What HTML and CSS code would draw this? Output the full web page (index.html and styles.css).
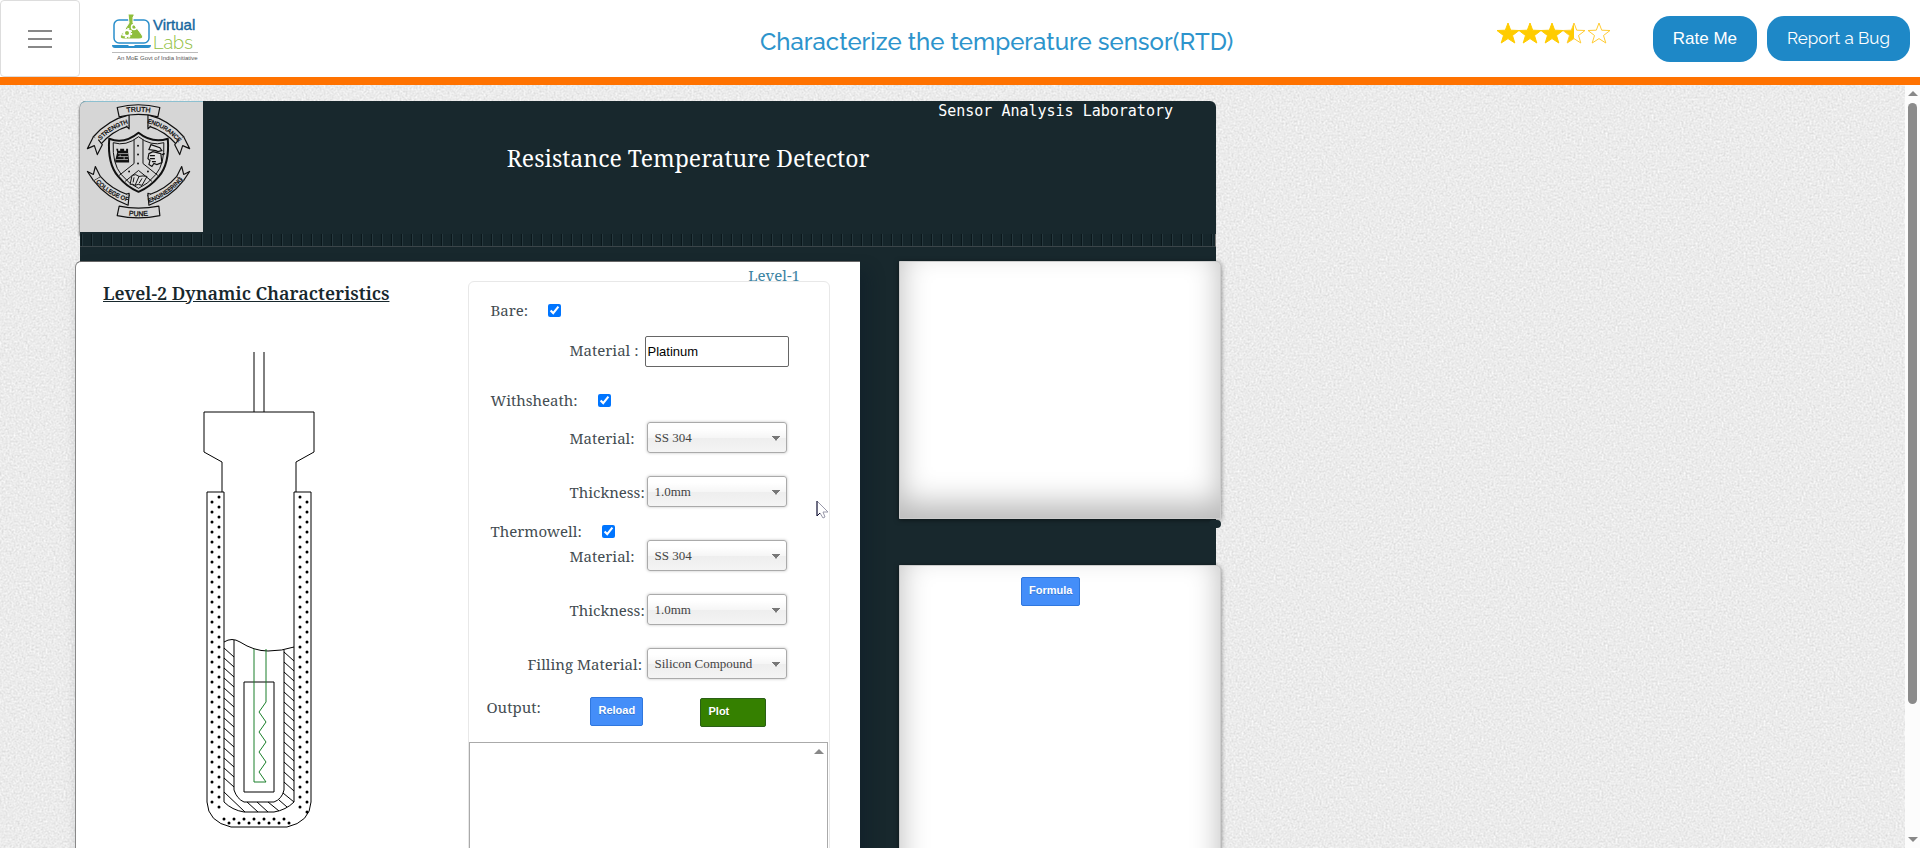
FILE: index.html
```html
<!DOCTYPE html>
<html lang="en">
<head>
<meta charset="utf-8">
<title>Characterize the temperature sensor(RTD)</title>
<link rel="stylesheet" href="styles.css">
</head>
<body>
<header class="topbar">
  <button class="menu" type="button" aria-label="Menu"><span></span><span></span><span></span></button>
  <a class="brand" href="#" aria-label="Virtual Labs">
    <svg width="88" height="50" viewBox="0 0 88 50">
      <rect x="2" y="6" width="35" height="23" rx="5" fill="none" stroke="#2a8fcb" stroke-width="1.500"/>
      <path d="M16 0h6v2l-1 1v6l9 12q2 4-3 4H12q-5 0-3-4l8-12z" fill="#8fbe3c" stroke="#fff" stroke-width="1"/>
      <circle cx="15" cy="19" r="3" fill="none" stroke="#fff" stroke-width="2"/>
      <circle cx="15" cy="19" r="4.500" fill="none" stroke="#fff" stroke-width="1.500" stroke-dasharray="2 1.500"/>
      <circle cx="22" cy="13" r="2.500" fill="none" stroke="#fff" stroke-width="1.500"/>
      <path d="M0 31h16l1 1h5l1-1h16q0 3-3 3H3q-3 0-3-3z" fill="#2a8fcb"/>
      <text class="brand-virtual" x="41" y="16">Virtual</text>
      <text class="brand-labs" x="41" y="35">Labs</text>
      <path d="M0 38.500h86" stroke="#bbb"/>
      <text class="brand-note" x="5" y="46">An MoE Govt of India Initiative</text>
    </svg>
  </a>
  <h1 class="page-title">Characterize the temperature sensor(RTD)</h1>
  <div class="actions">
    <svg class="stars" width="116" height="24" viewBox="0 0 116 24" role="img" aria-label="3.5 stars">
      <defs><path id="star" d="M11 1l2.700 7.200 8.300.300-6.500 5 2.300 7.500-6.800-4.400L4.200 21l2.300-7.500L0 8.500l8.300-.300z"/></defs>
      <g fill="#fc0" stroke="#fc0">
        <use href="#star"/><use href="#star" x="22"/><use href="#star" x="44"/>
        <path stroke="none" d="M77 1v15.600L70.200 21l2.300-7.500-6.500-5 8.300-.300z"/>
      </g>
      <g fill="none" stroke="#fc3" stroke-width="1"><use href="#star" x="66"/><use href="#star" x="91"/></g>
    </svg>
    <button class="pill" type="button">Rate Me</button>
    <a class="pill pill-report" href="#">Report a Bug</a>
  </div>
</header>

<main class="viewport">
  <svg class="grain" aria-hidden="true"><filter id="noise" color-interpolation-filters="sRGB"><feTurbulence type="fractalNoise" baseFrequency="0.5" numOctaves="3" seed="4"/><feColorMatrix values="0.120 0.120 0 0 0.802  0.120 0.120 0 0 0.802  0.120 0.120 0 0 0.802  0 0 0 0 1"/></filter><rect width="100%" height="100%" filter="url(#noise)"/></svg>
  <div class="scene">
    <section class="lab">
      <header class="banner">
        <svg class="crest" viewBox="0 0 123 131" role="img" aria-label="College of Engineering Pune">
          <defs>
            <g id="ribbons">
              <path d="M49 13Q28 18 13 35L20 43Q32 29 49 24z"/>
              <path d="M13 35L7 47l7-3 3 9 5-10-4-5M46 24l3 3v-3"/>
              <path d="M13 79Q26 96 48 104L49 94Q31 88 20 75z"/>
              <path d="M20 75l-5-10-2 8-6-3 6 9M46 93l3-1v3"/>
            </g>
            <path id="arc-strength" d="M19 40Q31 26 50 21"/>
            <path id="arc-endurance" d="M67 21Q87 26 99 41"/>
            <path id="arc-college" d="M14 79Q28 95 50 101"/>
            <path id="arc-engineering" d="M68 102Q89 95 104 77"/>
            <path id="arc-truth" d="M40 12Q58 7.500 77 12"/>
            <path id="arc-pune" d="M40 113Q58 117 77 113"/>
          </defs>
          <g fill="#d6d6d6" stroke="#111" stroke-width="1.200" stroke-linejoin="round">
            <use href="#ribbons"/>
            <use href="#ribbons" transform="matrix(-1 0 0 1 117 0)"/>
            <path d="M37 5.500Q58 0 80 5.500L78 15Q58 10 39 15z"/>
            <path d="M39 105Q58 109 79 105l1 9.500Q58 119 37 114.500z"/>
            <path stroke-width="2" d="M58.500 31Q44 43 29 37q-2 25 9 38 9 11 20.500 15.500Q70 86 79 75q11-13 9-38-16 5-29.500-6z"/>
            <path fill="none" stroke-width="1" d="M58.500 35Q46 45 33 41q-1 21 8 32 8 10 17.500 14Q68 83 76 73q9-11 8-32-13 4-25.500-6zM54 38v24L39 74M63 38v24l15 12M58.500 69L45 80M58.500 69L72 80"/>
          </g>
          <g fill="#111">
            <circle cx="58" cy="44" r="1"/><circle cx="58" cy="53" r="1"/><circle cx="58" cy="62" r="1"/><circle cx="49" cy="70" r="1"/><circle cx="68" cy="70" r="1"/>
            <path d="M36 47h2v2h2v-2h4v2h2v-2h2v4l1 8v2H35v-2l2-8z"/>
          </g>
          <path d="M38 52h10M38 55h10M36 58h12M40 53v2m4 0v3" stroke="#bbb" stroke-width=".8"/>
          <path d="M71 43l9 3 2 3-4 1-2-1-7-1zM69 52l4-2 8 2 1 9-5 2-3-1-2 3-3-2 1-4-2-2zM70 54h5m-5 3h5m-3 3h4M82 53l3-1" fill="#ddd" stroke="#111" stroke-width="1.200"/>
          <path d="M52 74q4-2 7 1 4-1 8 0l-5 9q-4-2-7 0-3-2-5-1zM59 75l-4 9M54 76l-1 5m9-4l-3 5" fill="#ddd" stroke="#111"/>
          <g class="motto">
            <text class="motto-big"><textPath href="#arc-truth" startOffset="50%">TRUTH</textPath></text>
            <text><textPath href="#arc-strength" startOffset="50%">STRENGTH</textPath></text>
            <text><textPath href="#arc-endurance" startOffset="50%">ENDURANCE</textPath></text>
            <text><textPath href="#arc-college" startOffset="50%">COLLEGE OF</textPath></text>
            <text><textPath href="#arc-engineering" startOffset="50%">ENGINEERING</textPath></text>
            <text class="motto-big"><textPath href="#arc-pune" startOffset="50%">PUNE</textPath></text>
          </g>
        </svg>
        <div class="banner-text">
          <p class="lab-name">Sensor Analysis Laboratory</p>
          <h2 class="lab-title">Resistance Temperature Detector</h2>
        </div>
      </header>
      <div class="ribs"></div>

      <div class="columns">
        <section class="work">
          <div class="figure">
            <h3 class="level">Level-2 Dynamic Characteristics</h3>
            <svg class="probe" width="120" height="480" viewBox="200 350 120 480" role="img" aria-label="RTD in thermowell">
              <g fill="none" stroke="#000">
                <path d="M254 352v60M264 352v60M222 492v-30l-18-10v-40h110v40l-18 10v30"/>
                <path d="M224 802V492h-17v310q1 20 24 25h56q23-5 24-25V492h-17v310"/>
                <path d="M224 642q8-5 16 0 14 9 28 9t26-4M234 640v150q3 9 10 12h30q8-3 10-12V650M224 802q8 8 20 10h30q12-2 20-10"/>
                <path d="M224 648l10 9m-10 1l10 9m-10 1l10 9m-10 1l10 9m-10 1l10 9m-10 1l10 9m-10 1l10 9m-10 1l10 9m-10 1l10 9m-10 1l10 9m-10 1l10 9m-10 1l10 9m-10 1l10 9m-10 1l10 9M224 792l21 20M247 802l11 10M257 802l11 10M268 802l11 9M279 800l8 7M283 793l11 9"/>
                <path d="M284 652l10 9m-10 1l10 9m-10 1l10 9m-10 1l10 9m-10 1l10 9m-10 1l10 9m-10 1l10 9m-10 1l10 9m-10 1l10 9m-10 1l10 9m-10 1l10 9m-10 1l10 9m-10 1l10 9m-10 1l10 9"/>
                <path d="M244 682h30v110h-30z"/>
                <path stroke="#1a7f2a" d="M254 649v133h12l-7-10 7-10-7-10 7-10-7-10 7-10-7-10 7-10v-53"/>
              </g>
              <path d="M219 497v311M212 502v301M300 497v311M307 502v311M224 819h61M229 823h61M222 813v0M216 818v0M292 813v0M298 820v0" fill="none" stroke="#000" stroke-width="3" stroke-linecap="round" stroke-dasharray="0 10"/>
            </svg>
          </div>
          <div class="controls">
            <a class="level-link" href="#">Level-1</a>
            <form class="form">
              <div class="check first"><label for="bare">Bare:</label><input id="bare" type="checkbox" checked></div>
              <div class="row material"><label for="bm">Material :</label><input id="bm" class="text" type="text" value="Platinum"></div>
              <div class="check second"><label for="ws">Withsheath:</label><input id="ws" type="checkbox" checked></div>
              <div class="rows">
                <div class="row"><label for="sm">Material:</label><select id="sm"><option>SS 304</option></select></div>
                <div class="row"><label for="st">Thickness:</label><select id="st"><option>1.0mm</option></select></div>
              </div>
              <div class="check third"><label for="tw">Thermowell:</label><input id="tw" type="checkbox" checked></div>
              <div class="rows">
                <div class="row"><label for="tm">Material:</label><select id="tm"><option>SS 304</option></select></div>
                <div class="row"><label for="tt">Thickness:</label><select id="tt"><option>1.0mm</option></select></div>
                <div class="row wide"><label for="fm">Filling Material:</label><select id="fm"><option>Silicon Compound</option></select></div>
              </div>
              <div class="output-row">
                <label for="out">Output:</label>
                <button class="btn" type="button">Reload</button>
                <button class="btn btn-plot" type="button">Plot</button>
              </div>
              <div class="output"><textarea id="out"></textarea><span class="arrow-up"></span></div>
            </form>
          </div>
        </section>
        <div class="side">
          <section class="card graph"></section>
          <div class="nub"></div>
          <section class="card formula"><button class="btn" type="button">Formula</button></section>
        </div>
      </div>
    </section>
    <svg class="cursor" width="13" height="19" viewBox="0 0 13 19" aria-hidden="true"><path d="M1 1v15l3-3 3 5 2-1-2-5h5z" fill="#fff" stroke="#99a"/><path d="M1 1v15l3-3" fill="none" stroke="#113"/></svg>
  </div>
  <div class="scrollbar" aria-hidden="true"><span class="arrow-up"></span><span class="thumb"></span><span class="arrow-down"></span></div>
</main>
</body>
</html>
```

FILE: styles.css
```css
* { box-sizing: border-box; }

body {
  margin: 0;
  height: 100vh;
  display: flex;
  flex-direction: column;
  overflow: hidden;
  font-family: "Noto Serif", "Droid Serif", "DejaVu Serif", serif;
  font-size: 15px;
  color: #444d52;
  background: #fff;
}

h1, h2, h3, p { margin: 0; }

.topbar {
  flex: none;
  height: 85px;
  display: grid;
  grid-template-columns: 80px 118px 32fr auto 15fr auto;
  border-bottom: 8px solid #ff7200;
}

.menu {
  display: flex;
  flex-direction: column;
  align-items: center;
  justify-content: center;
  gap: 6px;
  border: 1px solid #ddd;
  border-radius: 4px;
  background: #fff;
}
.menu span { width: 24px; height: 2px; background: #888; }

.brand { padding: 14px 0 0 32px; }
.brand svg { display: block; overflow: visible; }
.brand text { font-family: "Liberation Sans", sans-serif; }
.brand-virtual { font-size: 15px; fill: #17679f; stroke: #17679f; stroke-width: .4px; }
.brand .brand-labs { font-family: Raleway, Lato, sans-serif; font-weight: 300; font-size: 18px; fill: #8fbe3c; }
.brand-note { font-size: 6px; fill: #555; }

.page-title {
  grid-column: 4;
  padding-top: 26px;
  font-family: Raleway, Lato, sans-serif;
  font-size: 24px;
  line-height: 32px;
  font-weight: 500;
  color: #2d94cc;
}

.actions {
  grid-column: 6;
  display: flex;
  align-items: flex-start;
  padding: 16px 10px 0 0;
}
.stars { margin: 6px 40px 0 0; }
.pill {
  height: 46px;
  padding: 0 20px;
  border: 0;
  border-radius: 17px;
  background: #1e88c7;
  color: #fff;
  font: 17px/46px "Liberation Sans", sans-serif;
  text-decoration: none;
}
.pill-report { margin-left: 10px; font-family: Raleway, Lato, sans-serif; line-height: 45px; height: 45px; }

.viewport {
  position: relative;
  flex: 1;
  min-height: 0;
  display: flex;
  overflow: hidden;
  background: #ebebeb;
}
.grain { position: absolute; inset: 0; width: 100%; height: 100%; }

.scene { position: relative; flex: 1; padding: 16px 0 0 80px; }

.lab {
  max-width: 1136px;
  min-height: 900px;
  border-radius: 6px 6px 0 0;
  background: #18282d;
}

.banner {
  display: grid;
  grid-template-columns: 123px 1fr;
  height: 133px;
  border-radius: 6px 6px 0 0;
  box-shadow: -1px 2px 2px rgba(0, 0, 0, .4);
}
.crest {
  width: 123px;
  height: 131px;
  border-radius: 6px 0 0 0;
  border-top: 1px solid #8dc0d0;
  background: #d6d6d6;
}
.motto {
  font: 6px "Liberation Sans", sans-serif;
  text-anchor: middle;
  fill: #111;
  stroke: #111;
  stroke-width: .3px;
}
.motto-big { font-size: 7px; }
.banner-text { padding-right: 43px; color: #fff; }
.lab-name {
  text-align: right;
  font: 15px/20px "DejaVu Sans Mono", monospace;
}
.lab-title {
  padding-top: 20px;
  text-align: center;
  font-size: 23px;
  line-height: 34px;
  font-weight: 400;
}

.ribs {
  height: 13px;
  margin-bottom: 14px;
  border-right: 1px solid #777;
  border-bottom: 1px solid #3b4549;
  background: repeating-linear-gradient(90deg, #142529 0 1px, #0b171b 1px 2px, #26383e 2px 3px, #16262b 3px 10px);
}

.columns {
  display: grid;
  grid-template-columns: 785fr 322fr;
  gap: 39px;
  margin: 0 -5px;
}

.work {
  display: grid;
  grid-template-columns: 393fr 392fr;
  min-height: 640px;
  border-top: 1px solid #666;
  border-left: 1px solid #888;
  border-radius: 6px 0 0 0;
  background: #fff;
  box-shadow: 8px 10px 16px rgba(10, 25, 40, .4);
}
.figure { padding: 17px 0 0 27px; }
.level {
  font-size: 18px;
  line-height: 28px;
  font-weight: 600;
  color: #18282d;
  text-decoration: underline;
  white-space: nowrap;
}
.probe { display: block; margin: 43px 0 0 97px; }

.controls { padding-right: 30px; }
.level-link {
  display: block;
  height: 19px;
  padding-right: 30px;
  text-align: right;
  line-height: 26px;
  color: #3d84a3;
  text-decoration: none;
}
.form {
  min-height: 620px;
  padding-top: 19px;
  border: 1px solid #e8e8e8;
  border-radius: 6px;
}

.check { display: flex; align-items: center; height: 18px; padding-left: 21px; }
.check input { width: 13px; height: 13px; margin: 0 0 0 20px; }
.first { margin-bottom: 17px; }
.second { margin: 24px 0 13px; }
.third { margin: 15px 0 0; }

.rows { display: grid; gap: 23px; }
.row {
  display: grid;
  grid-template-columns: 178px 140px;
  height: 31px;
  align-items: center;
}
.row label { padding-left: 100px; white-space: nowrap; }
.material label { padding-bottom: 4px; }
.wide label { padding-left: 58px; }

.text {
  width: 144px;
  height: 31px;
  margin-left: -2px;
  padding: 0 1px;
  border: 1px solid #666;
  border-radius: 2px;
  font: 13px "Liberation Sans", sans-serif;
}

select {
  height: 31px;
  padding: 0 8px 1px 6px;
  border: 1px solid #aaa;
  border-radius: 3px;
  appearance: none;
  color: #444;
  font: 13px "Liberation Serif", serif;
  background:
    linear-gradient(to bottom left, #777 50%, transparent 52%) right 10px top 13px / 4px 5px no-repeat,
    linear-gradient(to bottom right, #777 50%, transparent 52%) right 6px top 13px / 4px 5px no-repeat,
    linear-gradient(#fff 20%, #f6f6f6 50%, #eee 52%, #f4f4f4 100%);
  box-shadow: 0 0 3px rgba(0, 0, 0, .25);
}

.output-row {
  display: grid;
  grid-template-columns: 104px 110px auto;
  justify-items: start;
  align-items: start;
  height: 30px;
  margin: 18px 0 15px;
  padding-left: 17px;
}
.output-row label { line-height: 20px; }

.btn {
  height: 29px;
  padding: 0 7px 4px;
  border: 1px solid #2f77de;
  border-radius: 2px;
  background: #448ef9;
  color: #fff;
  font: bold 11px "Liberation Sans", sans-serif;
  text-shadow: 0 1px rgba(0, 0, 0, .2);
}
.btn-plot {
  width: 66px;
  margin-top: 1px;
  border-color: #2a5f16;
  background: #358000;
  text-align: left;
}

.output {
  display: flex;
  height: 260px;
  margin-right: 1px;
  border: 1px solid #aaa;
}
.output textarea { flex: 1; border: 0; resize: none; outline: 0; }
.output .arrow-up { margin: 6px 3px 0 0; }

.arrow-up, .arrow-down {
  width: 0;
  height: 0;
  border: solid transparent;
  border-width: 0 5px 5px;
  border-bottom-color: #888;
}
.arrow-down { border-width: 5px 5px 0; border-top-color: #888; }

.card {
  border: 1px solid #ccc;
  border-radius: 0 6px 0 0;
  background: #fff;
  box-shadow: inset 0 -15px 30px rgba(0, 0, 0, .28), 0 1px 5px rgba(0, 0, 0, .5);
}
.graph { height: 258px; }
.nub {
  width: 12px;
  height: 8px;
  margin: 1px 0 37px auto;
  border-radius: 4px;
  background: #18282d;
}
.formula { height: 420px; padding: 11px 0 0 121px; }

.cursor { position: absolute; left: 816px; top: 415px; }

.scrollbar {
  position: relative;
  width: 15px;
  display: flex;
  flex-direction: column;
  align-items: center;
  padding: 6px 0;
  background: #fcfcfc;
}
.thumb { width: 9px; height: 80%; margin: 7px 0 auto; border-radius: 5px; background: #8b8b8b; }
```
